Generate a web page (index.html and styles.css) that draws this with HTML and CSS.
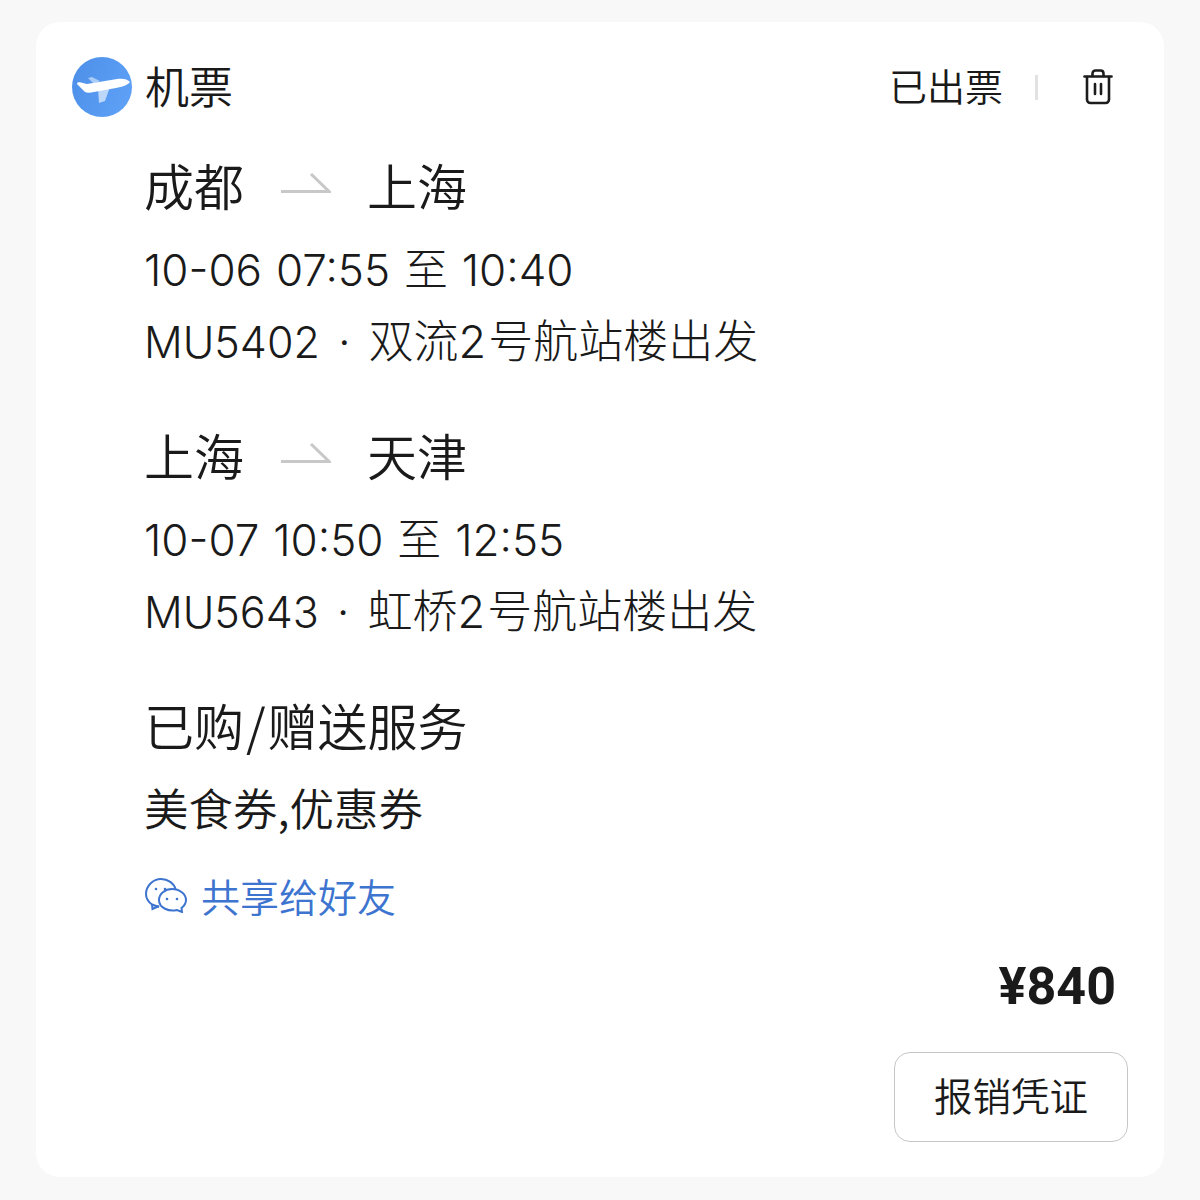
FILE: index.html
```html
<!DOCTYPE html>
<html lang="zh-CN">
<head>
<meta charset="utf-8">
<title>机票</title>
<link rel="stylesheet" href="styles.css">
</head>
<body>
<main class="card">
  <header class="head">
    <svg class="logo" viewBox="0 0 60 60" width="60" height="60">
      <defs><linearGradient id="g" x1="0" y1="0" x2="1" y2="0.400"><stop offset="0" stop-color="#4d8fe8"/><stop offset="1" stop-color="#5c9ff5"/></linearGradient></defs>
      <circle cx="30" cy="30" r="30" fill="url(#g)"/>
      <path d="M26 31 L38 30 L33 44 L27 46 Z" fill="#bcd7fa"/>
      <path d="M16 21 L20 20 L28 24 L22 27 Z" fill="#a9cbf7"/>
      <path d="M5 27 C5 25 7 25 9 25.500 L15 27 L45 22 C50 21 56 22 58 25 C56 28 50 30 44 31 L22 35 C18 36 15 36 13 35 Z" fill="#fff"/>
    </svg>
    <h1 class="kind">机票</h1>
    <div class="status">
      <span class="status-text">已出票</span>
      <span class="divider"></span>
      <svg class="trash" viewBox="0 0 30 36" width="30" height="36" fill="none" stroke="#1c1c1c" stroke-width="2.6" stroke-linecap="round" stroke-linejoin="round">
        <path d="M1.500 7.500H28.500"/>
        <path d="M9.500 7V4.500C9.500 2.500 11 1.500 12.500 1.500H17.500C19 1.500 20.500 2.500 20.500 4.500V7"/>
        <path d="M4 8V30.500C4 32.500 5.500 34 7.500 34H22.500C24.500 34 26 32.500 26 30.500V8"/>
        <path d="M12 15V25M18 15V25"/>
      </svg>
    </div>
  </header>

  <section class="flight">
    <div class="route"><span class="city">成都</span><svg class="arrow" viewBox="0 0 50 22" width="50" height="22"><path d="M0 19.500H48L30 2" fill="none" stroke="#c8c8c8" stroke-width="3"/></svg><span class="city">上海</span></div>
    <p class="line time">10-06 07:55 至 10:40</p>
    <p class="line info"><span class="code">MU5402</span><span class="dot">·</span>双流<span class="num">2</span>号航站楼出发</p>
  </section>

  <section class="flight">
    <div class="route"><span class="city">上海</span><svg class="arrow" viewBox="0 0 50 22" width="50" height="22"><path d="M0 19.500H48L30 2" fill="none" stroke="#c8c8c8" stroke-width="3"/></svg><span class="city">天津</span></div>
    <p class="line time">10-07 10:50 至 12:55</p>
    <p class="line info"><span class="code">MU5643</span><span class="dot">·</span>虹桥<span class="num">2</span>号航站楼出发</p>
  </section>

  <section class="services">
    <h2 class="services-title">已购<span class="slash">/</span>赠送服务</h2>
    <p class="line services-list">美食券,优惠券</p>
    <a class="share">
      <svg class="wechat" viewBox="0 0 42 36" width="42" height="36" fill="none" stroke="#3d74cf" stroke-width="2">
        <path d="M14 30 L7 27.500 C3.500 25 1 21.500 1 17 C1 9 8 2 16 2 C23 2 29 6.500 30.500 12"/>
        <path d="M7 27.500 L7.500 32 L14 29"/>
        <path d="M27 12 C34.500 12 41 17 41 23 C41 26.500 39 29 36.500 31 L37 35 L32 33 C24 35 14 31 14 23 C14 17 20 12 27 12 Z"/>
        <circle cx="11" cy="12" r="1.300" fill="#3d74cf" stroke="none"/>
        <circle cx="20" cy="12" r="1.300" fill="#3d74cf" stroke="none"/>
        <circle cx="22" cy="22" r="1.300" fill="#3d74cf" stroke="none"/>
        <circle cx="32" cy="22" r="1.300" fill="#3d74cf" stroke="none"/>
      </svg>
      <span class="share-text">共享给好友</span>
    </a>
  </section>

  <footer class="foot">
    <div class="price">¥840</div>
    <button class="voucher">报销凭证</button>
  </footer>
</main>
</body>
</html>
```
FILE: styles.css
```css
* { box-sizing: border-box; }
html, body { margin: 0; padding: 0; }
body {
  width: 1200px;
  height: 1200px;
  background: #f8f8f8;
  padding: 22px 36px 23px;
  font-family: "Noto Sans CJK SC", "Noto Sans", sans-serif;
  color: #1a1a1a;
}
.card {
  height: 1155px;
  background: #fff;
  border-radius: 24px;
  padding: 35px 36px 35px;
  display: flex;
  flex-direction: column;
}
.head { display: flex; align-items: center; height: 60px; }
.logo { flex: none; }
.kind { margin: 0 0 4px 13px; font-size: 44px; font-weight: 350; line-height: 56px; }
.status { margin-left: auto; display: flex; align-items: center; padding-right: 15px; }
.status-text { font-size: 38px; font-weight: 350; line-height: 56px; margin-bottom: 4px; }
.divider { width: 3px; height: 25px; background: #e2e2e2; margin: 0 45px 0 32px; }
.trash { flex: none; }
.flight { margin: 37px 0 0 72px; }
.flight + .flight { margin-top: 52px; }
.route { display: flex; align-items: center; height: 60px; }
.city { font-size: 50px; font-weight: 350; line-height: 60px; }
.arrow { margin: 0 36px 3px 37px; flex: none; }
.line { margin: 0; font-weight: 350; }
.time, .info { line-height: 60px; font-weight: 300; font-family: "Inter", "Noto Sans CJK SC", sans-serif; }
.time { font-size: 44px; word-spacing: 1.500px; margin-top: 26px; }
.info { font-size: 45px; margin-top: 12px; }
.code { font-size: 43px; }
.dot { margin: 0 18px; }
.num { margin: 0 2px 0 0; }
.services { margin: 52px 0 0 72px; }
.services-title { margin: 0; font-size: 50px; font-weight: 350; line-height: 60px; }
.slash { margin: 0 2px 0 2px; }
.services-list { font-size: 44.500px; line-height: 60px; margin-top: 23px; }
.share { display: flex; align-items: center; margin-top: 28px; color: #3d74cf; font-size: 39px; font-weight: 350; line-height: 60px; }
.wechat { margin: 0 14px 0 1px; flex: none; }
.foot { margin-top: auto; display: flex; flex-direction: column; align-items: flex-end; }
.price { font-family: "Roboto", sans-serif; font-size: 52px; font-weight: 700; line-height: 60px; margin-right: 12px; }
.voucher {
  margin-top: 35px;
  width: 234px;
  height: 90px;
  background: #fff;
  border: 1px solid #c6c6c6;
  border-radius: 16px;
  font: 350 38.500px/1 "Noto Sans CJK SC", sans-serif;
  color: #1a1a1a;
  padding: 0 0 5px;
}
```
